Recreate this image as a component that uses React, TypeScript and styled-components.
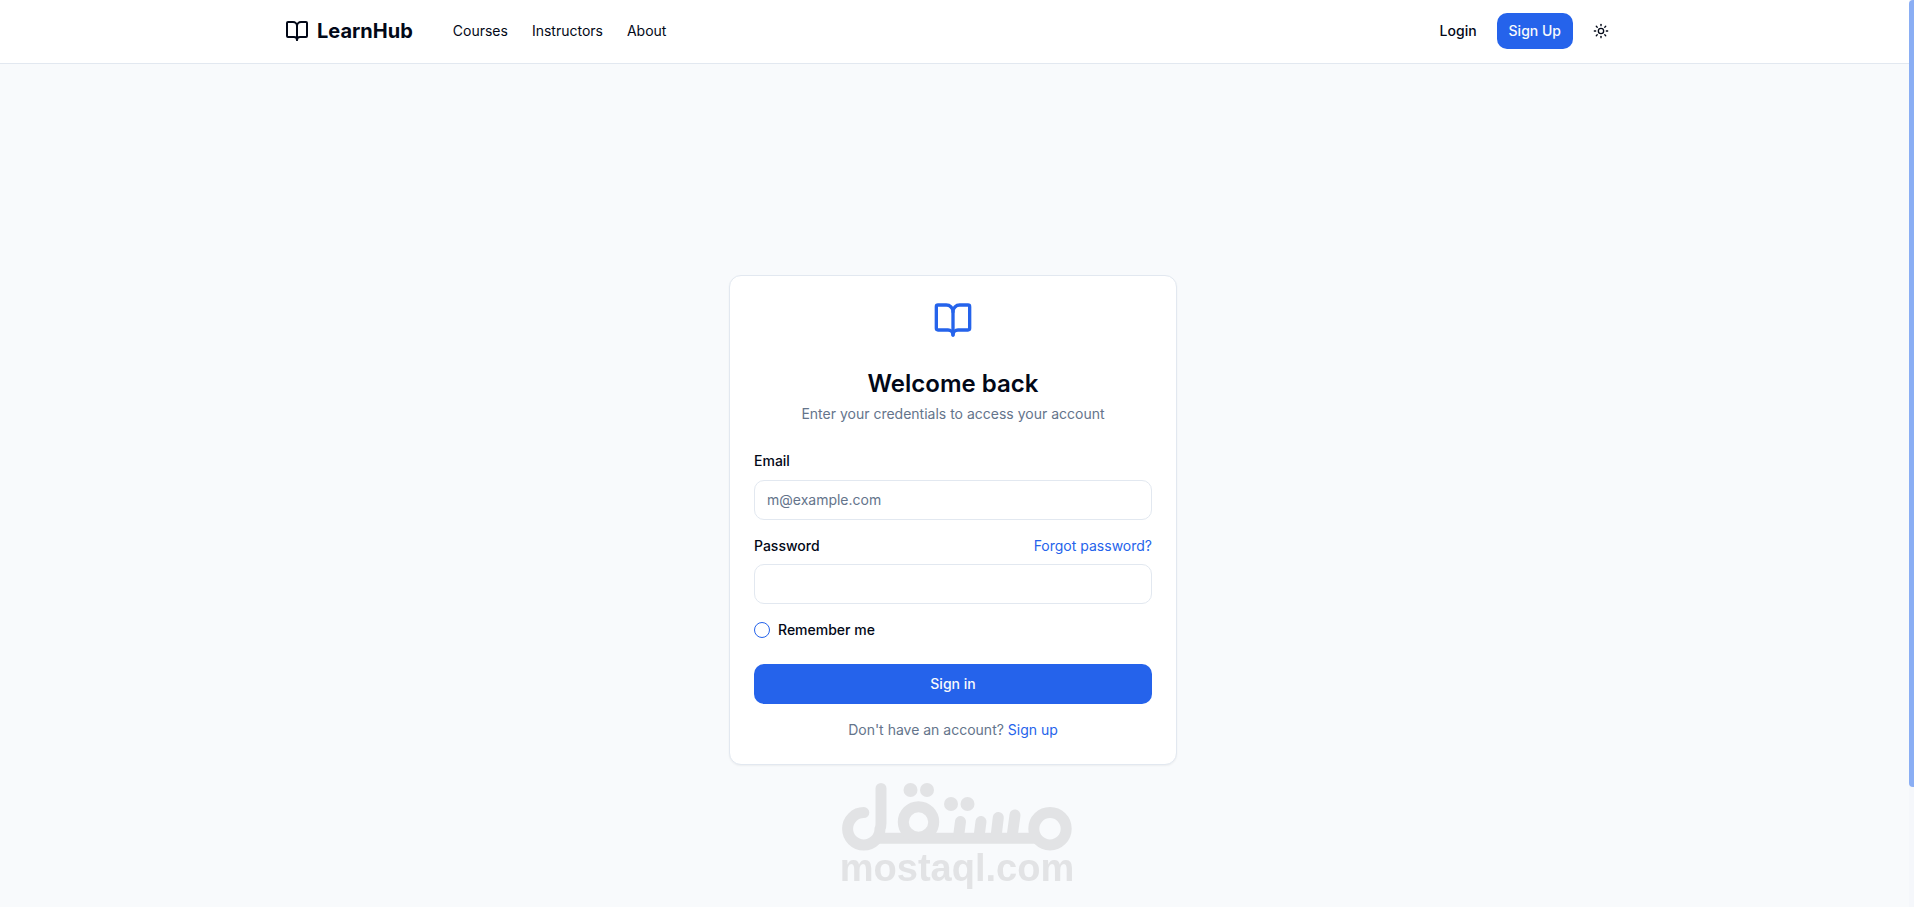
import React from "react";
import styled, { createGlobalStyle, css } from "styled-components";
import { BookOpen, Sun } from "lucide-react";

const GlobalStyle = createGlobalStyle`
  *, *::before, *::after { box-sizing: border-box; }
  body {
    margin: 0;
    background: #f8fafc;
    color: #020817;
    font-family: Inter, "Liberation Sans", sans-serif;
    font-size: 14px;
    line-height: 20px;
  }
`;

const Shell = styled.div`
  display: grid;
  grid-template-columns: minmax(0, 1fr) 5px;
  height: 100vh;
`;

const Page = styled.div`
  overflow-y: auto;
  scrollbar-width: none;
`;

const ScrollRail = styled.div`
  background: #f5f7fb;
`;

const ScrollThumb = styled.div`
  height: 787px;
  max-height: 87%;
  border-radius: 4px 0 0 4px;
  background: #8aaef4;
`;

const Header = styled.header`
  background: #ffffff;
  border-bottom: 1px solid #e2e8f0;
  padding: 0 3px 1px 0;
`;

const HeaderInner = styled.div`
  display: flex;
  align-items: center;
  max-width: 1400px;
  height: 62px;
  margin: 0 auto;
  padding: 0 32px;
`;

const Brand = styled.a`
  display: flex;
  align-items: center;
  gap: 8px;
  margin-right: 40px;
  color: inherit;
  font-size: 20px;
  font-weight: 700;
  line-height: 28px;
  text-decoration: none;
`;

const Nav = styled.nav`
  display: flex;
  flex: 1;
  gap: 24px;
`;

const NavLink = styled.a`
  color: inherit;
  text-decoration: none;
`;

const Actions = styled.div`
  display: flex;
  align-items: center;
  gap: 8px;
`;

const Button = styled.button<{ $primary?: boolean; $size?: "icon" | "wide" }>`
  display: inline-flex;
  align-items: center;
  justify-content: center;
  height: 36px;
  padding: 0 12px;
  border: 0;
  border-radius: 10px;
  background: transparent;
  color: inherit;
  font: inherit;
  font-weight: 500;
  cursor: pointer;

  ${(p) =>
    p.$primary &&
    css`
      background: #2563eb;
      color: #f8fafc;
    `}
  ${(p) =>
    p.$size === "icon" &&
    css`
      width: 40px;
      height: 40px;
      padding: 0;
    `}
  ${(p) =>
    p.$size === "wide" &&
    css`
      width: 100%;
      height: 40px;
      margin-top: 8px;
    `}
`;

const Main = styled.main`
  display: flex;
  align-items: center;
  justify-content: center;
  min-height: 100vh;
  padding: 53px 19px 48px 16px;
`;

const Card = styled.section`
  width: 100%;
  max-width: 448px;
  padding: 24px;
  border: 1px solid #e2e8f0;
  border-radius: 12px;
  background: #ffffff;
  box-shadow: 0 1px 2px rgba(0, 0, 0, 0.05);
`;

const CardHeader = styled.div`
  display: flex;
  flex-direction: column;
  align-items: center;
  gap: 4px;
  margin-bottom: 24px;
  text-align: center;
`;

const CardIcon = styled(BookOpen)`
  margin-bottom: 24px;
  color: #2563eb;
`;

const Title = styled.h1`
  margin: 0;
  font-size: 24px;
  font-weight: 600;
  line-height: 32px;
`;

const Muted = styled.p`
  margin: 0;
  color: #64748b;
  text-align: center;
`;

const Form = styled.form`
  display: flex;
  flex-direction: column;
  gap: 16px;
`;

const Field = styled.div`
  display: flex;
  flex-direction: column;
  gap: 8px;
`;

const Label = styled.label`
  font-size: 14px;
  font-weight: 500;
  line-height: 20px;
`;

const LabelLine = styled.div`
  font-size: 16px;
  line-height: 24px;
`;

const Row = styled.div<{ $spread?: boolean }>`
  display: flex;
  align-items: center;
  justify-content: ${(p) => (p.$spread ? "space-between" : "flex-start")};
  gap: 8px;
`;

const Input = styled.input`
  width: 100%;
  height: 40px;
  padding: 0 12px 2px;
  border: 1px solid #e2e8f0;
  border-radius: 10px;
  background: #ffffff;
  color: inherit;
  font: inherit;

  &::placeholder {
    color: #64748b;
    opacity: 1;
  }
`;

const Checkbox = styled.input`
  appearance: none;
  width: 16px;
  height: 16px;
  margin: 0;
  border: 1px solid #2563eb;
  border-radius: 8px;

  &:checked {
    background: #2563eb;
  }
`;

const TextLink = styled.a`
  color: #2563eb;
  text-decoration: none;
`;

const Watermark = styled.div`
  position: fixed;
  bottom: 12px;
  left: 50%;
  width: 240px;
  margin-left: -120px;
  pointer-events: none;
`;

function MostaqlMark() {
  return (
    <svg viewBox="-4 0 240 114" width="240" height="114" display="block" role="img" aria-label="mostaql.com">
      <g fill="none" stroke="#e2e3e5" strokeWidth="11" strokeLinecap="round">
        <path d="M22.800 31.600A16.200 16.200 0 1 0 39 47.800Q40 46 40 42V7.500" strokeLinejoin="round" />
        <path d="M36 57.300H198" strokeLinecap="butt" />
        <circle cx="77.500" cy="41" r="15.200" />
        <circle cx="209" cy="47.700" r="16.200" />
        <path d="M119.500 40.500L117.500 56M140 40.500L138 56M157.300 36.500L155 56M174 34L171 56" />
      </g>
      <g fill="#e2e3e5">
        <circle cx="69.500" cy="9" r="7" />
        <circle cx="86" cy="9" r="7" />
        <circle cx="110" cy="23" r="7" />
        <circle cx="126.500" cy="23" r="7" />
        <text
          x="116"
          y="100"
          fontFamily='"Liberation Sans", Arial, sans-serif'
          fontSize="38"
          fontWeight="700"
          textAnchor="middle"
        >
          mostaql.com
        </text>
      </g>
    </svg>
  );
}

export default function App() {
  return (
    <>
      <GlobalStyle />
      <Shell>
        <Page>
          <Header>
            <HeaderInner>
              <Brand href="#home">
                <BookOpen size={24} />
                LearnHub
              </Brand>
              <Nav>
                <NavLink href="#courses">Courses</NavLink>
                <NavLink href="#instructors">Instructors</NavLink>
                <NavLink href="#about">About</NavLink>
              </Nav>
              <Actions>
                <Button type="button">Login</Button>
                <Button type="button" $primary>
                  Sign Up
                </Button>
                <Button type="button" $size="icon" aria-label="Toggle theme">
                  <Sun size={16} />
                </Button>
              </Actions>
            </HeaderInner>
          </Header>
          <Main>
            <Card>
              <CardHeader>
                <CardIcon size={40} />
                <Title>Welcome back</Title>
                <Muted>Enter your credentials to access your account</Muted>
              </CardHeader>
              <Form onSubmit={(e) => e.preventDefault()}>
                <Field>
                  <LabelLine>
                    <Label htmlFor="email">Email</Label>
                  </LabelLine>
                  <Input id="email" type="email" placeholder="m@example.com" />
                </Field>
                <Field>
                  <Row $spread>
                    <Label htmlFor="password">Password</Label>
                    <TextLink href="#forgot">Forgot password?</TextLink>
                  </Row>
                  <Input id="password" type="password" />
                </Field>
                <Row>
                  <Checkbox id="remember" type="checkbox" />
                  <Label htmlFor="remember">Remember me</Label>
                </Row>
                <Button type="submit" $primary $size="wide">
                  Sign in
                </Button>
                <Muted>
                  Don't have an account? <TextLink href="#signup">Sign up</TextLink>
                </Muted>
              </Form>
            </Card>
          </Main>
        </Page>
        <ScrollRail>
          <ScrollThumb />
        </ScrollRail>
      </Shell>
      <Watermark>
        <MostaqlMark />
      </Watermark>
    </>
  );
}
